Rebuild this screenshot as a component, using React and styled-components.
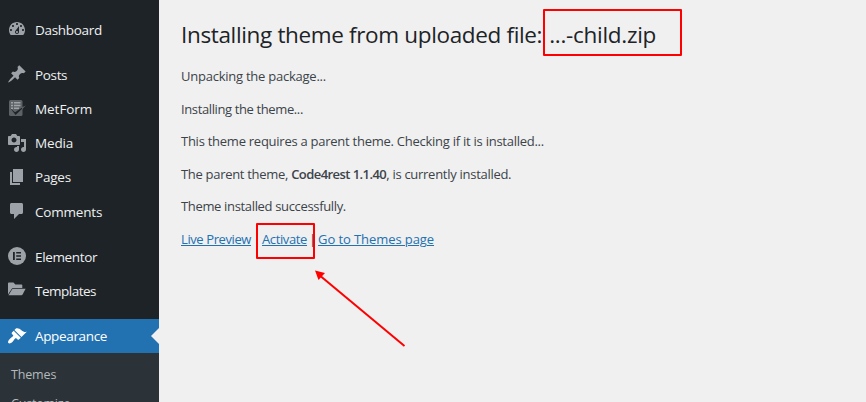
import React from "react";
import styled, { createGlobalStyle } from "styled-components";

const GlobalStyle = createGlobalStyle`
  body { margin: 0; background: #f0f0f0; overflow: hidden; }
  * { box-sizing: border-box; }
`;

const Page = styled.div`
  display: flex;
  width: 866px;
  height: 402px;
  overflow: hidden;
  background: #f0f0f0;
  color: #3c434a;
  font-family: "Open Sans", "Noto Sans", sans-serif;
  font-size: 13px;
`;

const Sidebar = styled.nav`
  flex: 0 0 159px;
  padding-top: 12px;
  background: #1d2327;
  overflow: hidden;
`;

const MenuItem = styled.a`
  position: relative;
  display: flex;
  align-items: flex-start;
  gap: 8px;
  height: ${(p) => p.$height || 34}px;
  margin-bottom: ${(p) => p.$after || 0}px;
  padding: 0 0 0 7px;
  background: ${(p) => (p.$active ? "#2271b1" : "transparent")};
  color: ${(p) => (p.$active ? "#fff" : "#f0f0f1")};
`;

const MenuIcon = styled.svg`
  flex: none;
  width: 20px;
  height: 20px;
  margin-top: ${(p) => p.$top ?? 7}px;
  fill: ${(p) => (p.$active ? "#fff" : "#9ca2a7")};
`;

const MenuLabel = styled.span`
  margin-top: ${(p) => (p.$active ? 7 : 8)}px;
  font-size: 13.5px;
  line-height: 20px;
  letter-spacing: ${(p) => p.$spacing}px;
  white-space: nowrap;
`;

const Pointer = styled.span`
  position: absolute;
  right: 0;
  top: 9px;
  border: 8px solid transparent;
  border-left: 0;
  border-right-color: #f0f0f0;
`;

const Submenu = styled.div`
  display: flex;
  flex-direction: column;
  height: 60px;
  padding: 12px 0 0 11px;
  background: #2c3338;
`;

const SubmenuItem = styled.a`
  flex: none;
  height: 29px;
  font-size: 12.5px;
  line-height: 20px;
  letter-spacing: ${(p) => p.$spacing}px;
  color: #b4b9be;
`;

const Content = styled.main`
  flex: 1;
  padding: 19px 0 0 22px;
`;

const Title = styled.h1`
  display: flex;
  gap: 7px;
  margin: 0 0 31px;
  height: 32px;
  color: #1d2327;
  font-size: 22.5px;
  font-weight: 400;
  line-height: 32px;
  white-space: nowrap;
`;

const Text = styled.span`
  letter-spacing: ${(p) => p.$spacing || 0}px;
`;

const Strong = styled.strong`
  font-weight: 600;
  letter-spacing: -0.56px;
`;

const Marked = styled.span`
  position: relative;
`;

const Highlight = styled.span`
  position: absolute;
  left: ${(p) => p.$left}px;
  top: ${(p) => p.$top}px;
  width: ${(p) => p.$width}px;
  height: ${(p) => p.$height}px;
  border: 2px solid #fe0000;
  border-radius: 1px;
`;

const Messages = styled.div`
  display: flex;
  flex-direction: column;
  margin-top: -16px;
`;

const Message = styled.p`
  display: flex;
  margin: 0;
  height: ${(p) => p.$height}px;
  line-height: 20px;
  white-space: pre;
`;

const Link = styled.a`
  height: 20px;
  color: #2271b1;
  letter-spacing: ${(p) => p.$spacing}px;
  text-decoration: underline;
  text-decoration-thickness: 1px;
  text-underline-offset: 1px;
`;

const Gap = styled.span`
  width: 11px;
  padding-left: ${(p) => p.$inset || 0}px;
`;

const Arrow = styled.svg`
  position: absolute;
  left: 51px;
  top: 39px;
  width: 96px;
  height: 82px;
`;

const icons = {
  dashboard: <path d="M3.76 16h12.48c1.1-1.37 1.76-3.11 1.76-5 0-4.42-3.58-8-8-8s-8 3.58-8 8c0 1.89.66 3.63 1.76 5zM10 4c.55 0 1 .45 1 1s-.45 1-1 1-1-.45-1-1 .45-1 1-1zM6 6c.55 0 1 .45 1 1s-.45 1-1 1-1-.45-1-1 .45-1 1-1zm8 0c.55 0 1 .45 1 1s-.45 1-1 1-1-.45-1-1 .45-1 1-1zm-5.37 5.55L12 7v6c0 1.1-.9 2-2 2s-2-.9-2-2c0-.57.24-1.08.63-1.45zM4 10c.55 0 1 .45 1 1s-.45 1-1 1-1-.45-1-1 .45-1 1-1zm12 0c.55 0 1 .45 1 1s-.45 1-1 1-1-.45-1-1 .45-1 1-1zm-5 3c0-.55-.45-1-1-1s-1 .45-1 1 .45 1 1 1 1-.45 1-1z" />,
  posts: <path d="M10.44 3.02l1.82-1.82 6.36 6.35-1.83 1.82c-1.05-.68-2.48-.57-3.41.36l-.75.75c-.92.93-1.04 2.35-.35 3.41l-1.83 1.82-2.41-2.41-2.8 2.79c-.42.42-3.38 2.71-3.8 2.29s1.86-3.39 2.28-3.81l2.79-2.79L4.1 9.36l1.83-1.82c1.05.69 2.48.57 3.4-.36l.75-.75c.93-.92 1.05-2.35.36-3.41z" />,
  metform: (
    <>
      <rect x="2" y="2" width="13.5" height="16" rx="1.5" fill="#5c6266" />
      <path d="M4 4h2v1.5H4zM7 4h6.500v1.500H7zM4 6.700h2v1.500H4zM7 6.700h6.500v1.500H7zM4 9.400h2v1.500H4zM7 9.400h5v1.500H7z" fill="#a0a4a7" />
      <path d="M3.500 10.500L8 14.300 18.500 7.500 8.600 17z" fill="#1d2327" />
      <path d="M15 9.200l3.800-1.600L15 11.600z" fill="#5c6266" />
    </>
  ),
  media: <path d="M13 11V4c0-.55-.45-1-1-1h-1.67L9 1H5L3.67 3H2c-.55 0-1 .45-1 1v7c0 .55.45 1 1 1h10c.55 0 1-.45 1-1zM7 4.5c1.38 0 2.5 1.12 2.5 2.5S8.38 9.5 7 9.5 4.5 8.38 4.5 7 5.62 4.5 7 4.5zM14 6h5v10.5c0 1.38-1.12 2.5-2.5 2.5S14 17.88 14 16.5s1.12-2.5 2.5-2.5c.17 0 .34.02.5.05V9h-3V6zm-4 8.05V13h2v3.5c0 1.38-1.12 2.5-2.5 2.5S7 17.88 7 16.5 8.12 14 9.5 14c.17 0 .34.02.5.05z" />,
  pages: <path d="M6 15V2h10v13H6zm-1 1h8v2H3V5h2v11z" />,
  comments: <path d="M4.5 2h10c.8 0 1.5.7 1.5 1.5v8c0 .8-.7 1.5-1.5 1.5H12l-5 5v-5H4.5C3.7 13 3 12.300 3 11.500v-8C3 2.700 3.700 2 4.500 2z" />,
  elementor: (
    <>
      <circle cx="10" cy="10" r="9" />
      <path d="M6 6h1.800v8H6zM9.200 6H14v1.600H9.200zM9.200 9.200H14v1.600H9.200zM9.200 12.400H14V14H9.200z" fill="#1d2327" />
    </>
  ),
  templates: (
    <>
      <path d="M1 14.500V3.300c0-.5.4-.8.8-.8h4.700l1.800 2h6.200c.5 0 .8.300.8.800V8H6.300c-.6 0-1.200.300-1.500.8z" />
      <path d="M1.500 15.200L5 9.600c.3-.5.700-.8 1.200-.8h12.400l-3 5.600c-.3.500-.7.800-1.200.8z" />
    </>
  ),
  appearance: <path d="M14.48 11.06L7.41 3.99l1.5-1.5c.5-.56 2.3-.47 3.51.32 1.21.8 1.43 1.28 2.91 2.1 1.18.64 2.45 1.26 4.45.85zm-.71.71L6.7 4.7 4.93 6.47c-.39.39-.39 1.02 0 1.41l1.06 1.06c.39.39.39 1.03 0 1.42-.6.6-1.43 1.11-2.21 1.69-.35.26-.7.53-1.01.84C1.43 14.23.4 16.08 1.4 17.07c.99 1 2.84-.03 4.18-1.36.31-.31.58-.66.85-1.02.57-.78 1.08-1.61 1.69-2.21.39-.39 1.02-.39 1.41 0l1.06 1.06c.39.39 1.02.39 1.41 0z" />,
};

const menu = [
  { label: "Dashboard", icon: "dashboard", spacing: -0.3, after: 11 },
  { label: "Posts", icon: "posts", spacing: -0.35 },
  { label: "MetForm", icon: "metform", spacing: -0.05 },
  { label: "Media", icon: "media", spacing: -0.15, top: 8 },
  { label: "Pages", icon: "pages", spacing: -0.2, top: 8, height: 35 },
  { label: "Comments", icon: "comments", spacing: -0.2, after: 11 },
  { label: "Elementor", icon: "elementor", spacing: -0.35 },
  { label: "Templates", icon: "templates", spacing: -0.5, after: 12, top: 7 },
  { label: "Appearance", icon: "appearance", spacing: -0.35, active: true },
];

export default function App() {
  return (
    <Page>
      <GlobalStyle />
      <Sidebar>
        {menu.map((m) => (
          <MenuItem key={m.label} $height={m.height} $after={m.after} $active={m.active}>
            <MenuIcon viewBox="0 0 20 20" $top={m.top} $active={m.active}>
              {icons[m.icon]}
            </MenuIcon>
            <MenuLabel $spacing={m.spacing} $active={m.active}>{m.label}</MenuLabel>
            {m.active && <Pointer />}
          </MenuItem>
        ))}
        <Submenu>
          <SubmenuItem $spacing={-0.15}>Themes</SubmenuItem>
          <SubmenuItem $spacing={-0.2}>Customize</SubmenuItem>
        </Submenu>
      </Sidebar>
      <Content>
        <Title>
          <Text $spacing={-0.35}>Installing theme from uploaded file:</Text>
          <Marked>
            <Text $spacing={-0.28}>...-child.zip</Text>
            <Highlight $left={-6} $top={-10} $width={139} $height={47} />
          </Marked>
        </Title>
        <Messages>
          <Message $height={33}><Text $spacing={-0.24}>Unpacking the package...</Text></Message>
          <Message $height={32}><Text $spacing={-0.38}>Installing the theme...</Text></Message>
          <Message $height={33}>
            <Text $spacing={-0.255}>This theme requires a parent theme. Checking if it is installed...</Text>
          </Message>
          <Message $height={32}>
            <Text $spacing={-0.3}>The parent theme, </Text>
            <Strong>Code4rest 1.1.40</Strong>
            <Text $spacing={-0.28}>, is currently installed.</Text>
          </Message>
          <Message $height={33}><Text $spacing={-0.34}>Theme installed successfully.</Text></Message>
          <Message $height={20}>
            <Link $spacing={-0.4}>Live Preview</Link>
            <Gap />
            <Marked>
              <Link $spacing={-0.38}>Activate</Link>
              <Highlight $left={-6} $top={-6} $width={59} $height={36} />
              <Arrow viewBox="0 0 96 82">
                <path d="M5 6L91.500 78" stroke="#fe0000" strokeWidth="2" />
                <path d="M2 2.500L12 5L5.500 12z" fill="#fe0000" />
              </Arrow>
            </Marked>
            <Gap $inset={2}>|</Gap>
            <Link $spacing={-0.08}>Go to Themes page</Link>
          </Message>
        </Messages>
      </Content>
    </Page>
  );
}
